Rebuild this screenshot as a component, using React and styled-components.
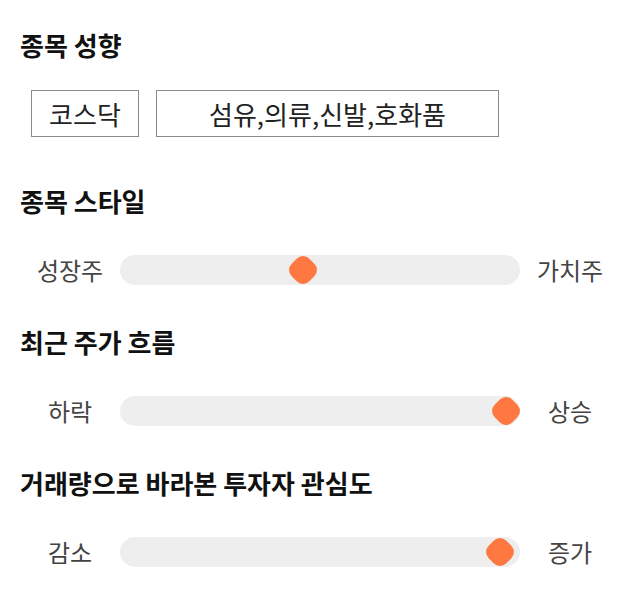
import React from "react";
import styled, { createGlobalStyle } from "styled-components";

const GlobalStyle = createGlobalStyle`
  body {
    margin: 0;
    background: #ffffff;
    font-family: "Noto Sans CJK KR", "Noto Sans", sans-serif;
  }
`;

const sliders = [
  { title: "종목 스타일", left: "성장주", right: "가치주", value: 0.454 },
  { title: "최근 주가 흐름", left: "하락", right: "상승", value: 1 },
  { title: "거래량으로 바라본 투자자 관심도", left: "감소", right: "증가", value: 0.984 },
];

const App = () => {
  return (
    <Page>
      <GlobalStyle />
      <Section $after={45}>
        <Title>종목 성향</Title>
        <TagRow>
          <Tag $width={108}>코스닥</Tag>
          <Tag $width={343}>섬유,의류,신발,호화품</Tag>
        </TagRow>
      </Section>
      {sliders.map((s) => (
        <Section key={s.title} $after={38}>
          <Title>{s.title}</Title>
          <SliderRow>
            <Label>{s.left}</Label>
            <Track>
              <Thumb
                style={{ left: `calc(14px + (100% - 28px) * ${s.value})` }}
              />
            </Track>
            <Label>{s.right}</Label>
          </SliderRow>
        </Section>
      ))}
    </Page>
  );
};

const Page = styled.div`
  width: 640px;
  box-sizing: border-box;
  padding: 26px 20px 0;
  display: flex;
  flex-direction: column;
`;

const Section = styled.section`
  display: flex;
  flex-direction: column;
  margin-bottom: ${(p) => p.$after}px;
`;

const Title = styled.h2`
  margin: 0;
  font-size: 26px;
  line-height: 38px;
  font-weight: 700;
  color: #111111;
`;

const TagRow = styled.div`
  display: flex;
  gap: 17px;
  margin-top: 26px;
  padding-left: 11px;
`;

const Tag = styled.div`
  width: ${(p) => p.$width}px;
  height: 47px;
  box-sizing: border-box;
  border: 1px solid #8a8a8a;
  display: flex;
  align-items: center;
  justify-content: center;
  font-size: 26px;
  color: #222222;
`;

const SliderRow = styled.div`
  display: grid;
  grid-template-columns: 100px 1fr 100px;
  align-items: center;
  margin-top: 35px;
`;

const Label = styled.div`
  text-align: center;
  font-size: 24px;
  line-height: 30px;
  color: #444444;
`;

const Track = styled.div`
  position: relative;
  height: 30px;
  border-radius: 15px;
  background: #eeeeee;
`;

const Thumb = styled.span`
  position: absolute;
  top: 50%;
  width: 25px;
  height: 25px;
  border-radius: 9px;
  background: #ff7842;
  transform: translate(-50%, -50%) rotate(45deg);
`;

export default App;
